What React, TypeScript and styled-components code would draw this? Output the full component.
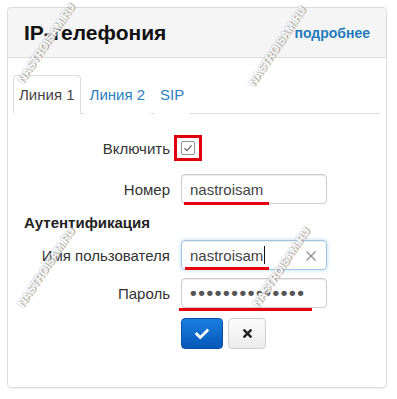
import React from 'react'
import styled, { createGlobalStyle } from 'styled-components'
import { FaCheck, FaTimes } from 'react-icons/fa'

const GlobalStyle = createGlobalStyle`
  body {
    margin: 0;
    background: #fff;
    font-family: 'Liberation Sans', Arial, sans-serif;
    color: #333;
  }
`

const Page = styled.div`
  position: relative;
  width: 397px;
  height: 399px;
  padding: 7px 10px 0 7px;
  box-sizing: border-box;
  overflow: hidden;
`

const Panel = styled.div`
  width: 380px;
  height: 381px;
  box-sizing: border-box;
  border: 1px solid #dcdcdc;
  border-radius: 4px;
  box-shadow: 0 1px 1px rgba(0, 0, 0, 0.05);
  display: flex;
  flex-direction: column;
`

const Header = styled.div`
  height: 49px;
  background: #f5f5f5;
  border-bottom: 1px solid #dcdcdc;
  border-radius: 3px 3px 0 0;
  display: flex;
  align-items: center;
  justify-content: space-between;
  padding: 0 16px 0 16px;
`

const Title = styled.h3`
  margin: 0;
  font-size: 21px;
  font-weight: bold;
  color: #111;
`

const MoreLink = styled.a`
  font-size: 14px;
  font-weight: bold;
  color: #1f7bbd;
  text-decoration: none;
`

const Body = styled.div`
  padding: 17px 6px 0 5px;
`

const Tabs = styled.div`
  display: flex;
  border-bottom: 1px solid #dddddd;
  height: 38px;
`

const Tab = styled.div<{ $active?: boolean }>`
  padding: 0 5px;
  margin-right: 3px;
  display: flex;
  align-items: center;
  font-size: 15px;
  color: ${(p) => (p.$active ? '#444' : '#2a80c0')};
  border: 1px solid ${(p) => (p.$active ? '#dddddd' : 'transparent')};
  border-bottom-color: ${(p) => (p.$active ? '#fff' : 'transparent')};
  border-radius: 4px 4px 0 0;
  background: #fff;
  margin-bottom: -1px;
`

const Form = styled.div`
  display: flex;
  flex-direction: column;
`

const Row = styled.div<{ $top: number }>`
  display: flex;
  align-items: center;
  gap: 11px;
  margin-top: ${(p) => p.$top}px;
`

const Label = styled.div`
  width: 157px;
  text-align: right;
  font-size: 15px;
  color: #333;
`

const Section = styled.div`
  margin-top: 9px;
  padding-left: 11px;
  font-size: 15px;
  font-weight: bold;
  line-height: 20px;
  color: #222;
`

const CheckWrap = styled.div`
  position: relative;
  width: 14px;
  height: 26px;
  display: flex;
  align-items: center;
`

const CheckBox = styled.div`
  width: 12px;
  height: 12px;
  border: 1px solid #999;
  border-radius: 2px;
  background: #fff;
  display: flex;
  align-items: center;
  justify-content: center;
`

const RedFrame = styled.div`
  position: absolute;
  left: -7px;
  top: 0;
  width: 28px;
  height: 26px;
  box-sizing: border-box;
  border: 3px solid #e0000b;
`

const Field = styled.div<{ $focus?: boolean }>`
  position: relative;
  width: 146px;
  height: 30px;
  box-sizing: border-box;
  border: 1px solid ${(p) => (p.$focus ? '#9ec3e6' : '#cccccc')};
  border-radius: 4px;
  box-shadow: ${(p) =>
    p.$focus
      ? 'inset 0 1px 1px rgba(0,0,0,.075), 0 0 4px rgba(102,175,233,.45)'
      : 'inset 0 1px 1px rgba(0,0,0,.075)'};
  padding: 0 8px;
  display: flex;
  align-items: center;
  font-size: 15px;
  color: #444;
`

const Caret = styled.span`
  display: inline-block;
  width: 1px;
  height: 18px;
  background: #111;
  margin-left: 1px;
`

const Dots = styled.span`
  font-size: 19px;
  letter-spacing: 1.6px;
  color: #555;
  font-weight: bold;
`

const ClearIcon = styled.span`
  position: absolute;
  right: 9px;
  top: 7px;
  color: #888;
`

const Underline = styled.div<{ $left: number; $top: number; $width: number }>`
  position: absolute;
  left: ${(p) => p.$left}px;
  top: ${(p) => p.$top}px;
  width: ${(p) => p.$width}px;
  height: 3px;
  background: #e8000b;
`

const Buttons = styled.div`
  display: flex;
  gap: 5px;
  margin-top: 10px;
  margin-left: 168px;
`

const Button = styled.button<{ $primary?: boolean }>`
  height: 31px;
  width: ${(p) => (p.$primary ? 42 : 38)}px;
  border-radius: 4px;
  border: 1px solid ${(p) => (p.$primary ? '#0a4fa3' : '#cfcfcf')};
  background: ${(p) =>
    p.$primary
      ? 'linear-gradient(to bottom, #1a7fe0 0%, #0558b8 100%)'
      : 'linear-gradient(to bottom, #fbfbfb 0%, #ececec 100%)'};
  color: ${(p) => (p.$primary ? '#fff' : '#222')};
  display: flex;
  align-items: center;
  justify-content: center;
  padding: 0;
`

const Watermark = styled.div<{ $x: number; $y: number }>`
  position: absolute;
  left: ${(p) => p.$x - 52}px;
  top: ${(p) => p.$y - 7}px;
  width: 104px;
  height: 14px;
  line-height: 14px;
  text-align: center;
  font-size: 11px;
  font-weight: bold;
  color: #fff;
  text-shadow: 0 0 2px #999, 1px 1px 1px #aaa;
  transform: rotate(-56deg);
  pointer-events: none;
`

const marks = [
  { x: 46, y: 43 },
  { x: 277, y: 46 },
  { x: 46, y: 267 },
  { x: 281, y: 267 },
]

export default function App() {
  return (
    <>
      <GlobalStyle />
      <Page>
        <Panel>
          <Header>
            <Title>IP-телефония</Title>
            <MoreLink href="#">подробнее</MoreLink>
          </Header>
          <Body>
            <Tabs>
              <Tab $active>Линия 1</Tab>
              <Tab>Линия 2</Tab>
              <Tab>SIP</Tab>
            </Tabs>
            <Form>
              <Row $top={21}>
                <Label>Включить</Label>
                <CheckWrap>
                  <CheckBox>
                    <svg width="10" height="10" viewBox="0 0 10 10" fill="none">
                      <path d="M1.5 5.2 L4 7.6 L8.6 2.4" stroke="#666" strokeWidth="1.2" />
                    </svg>
                  </CheckBox>
                  <RedFrame />
                </CheckWrap>
              </Row>
              <Row $top={13}>
                <Label>Номер</Label>
                <Field>
                  nastroisam
                  <Underline $left={2} $top={27} $width={85} />
                </Field>
              </Row>
              <Section>Аутентификация</Section>
              <Row $top={7}>
                <Label>Имя пользователя</Label>
                <Field $focus>
                  nastroisam
                  <Caret />
                  <ClearIcon>
                    <svg width="12" height="12" viewBox="0 0 12 12">
                      <path d="M1.5 1.5 L10.5 10.5 M10.5 1.5 L1.5 10.5" stroke="#8a8a8a" strokeWidth="1.1" />
                    </svg>
                  </ClearIcon>
                  <Underline $left={3} $top={26} $width={84} />
                </Field>
              </Row>
              <Row $top={8}>
                <Label>Пароль</Label>
                <Field>
                  <Dots>••••••••••••••</Dots>
                  <Underline $left={-3} $top={29} $width={133} />
                </Field>
              </Row>
              <Buttons>
                <Button $primary>
                  <FaCheck size={14} />
                </Button>
                <Button>
                  <FaTimes size={13} />
                </Button>
              </Buttons>
            </Form>
          </Body>
        </Panel>
        {marks.map((m, i) => (
          <Watermark key={i} $x={m.x} $y={m.y}>
            NASTROISAM.RU
          </Watermark>
        ))}
      </Page>
    </>
  )
}
